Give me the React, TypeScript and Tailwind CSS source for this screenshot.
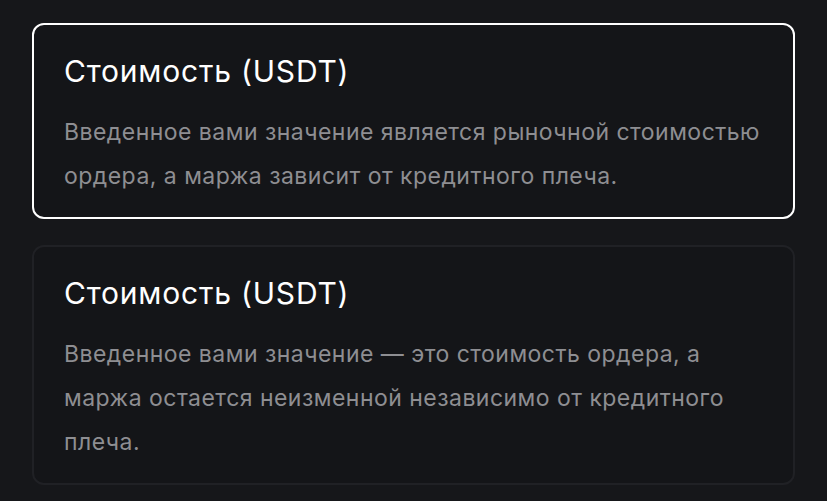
const cards = [
  {
    title: "Стоимость (USDT)",
    text: "Введенное вами значение является рыночной стоимостью ордера, а маржа зависит от кредитного плеча.",
    active: true,
  },
  {
    title: "Стоимость (USDT)",
    text: "Введенное вами значение — это стоимость ордера, а маржа остается неизменной независимо от кредитного плеча.",
    active: false,
  },
];

export default function App() {
  return (
    <div
      className="min-h-[501px] w-full bg-[#16171a] px-[32px] pt-[23px] pb-[17px]"
      style={{ fontFamily: "Inter, 'Noto Sans', sans-serif" }}
    >
      <div className="flex flex-col gap-[26px]">
        {cards.map((card, i) => (
          <div
            key={i}
            className={`rounded-[12px] border-2 px-[30px] pt-[29px] pb-[19px] ${
              card.active ? "border-white bg-[#141518]" : "border-[#202125] bg-[#141518]"
            }`}
          >
            <div className="text-[30px] leading-[34px] tracking-[0.8px] text-white">{card.title}</div>
            <p className="mt-[22px] text-[23px] leading-[44px] tracking-[0.47px] text-[#8e8e92]">
              {card.text}
            </p>
          </div>
        ))}
      </div>
    </div>
  );
}
